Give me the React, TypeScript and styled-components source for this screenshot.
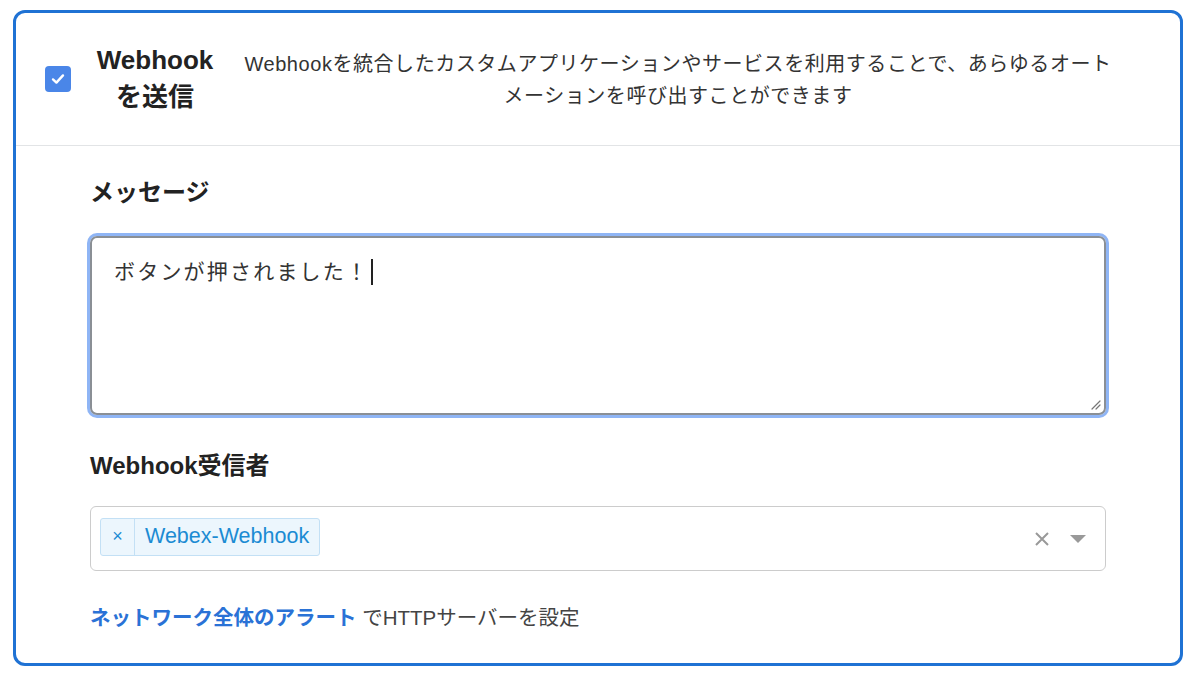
import styled, { createGlobalStyle } from 'styled-components';

const GlobalStyle = createGlobalStyle`
	html, body {
		margin: 0;
		padding: 0;
		background: #ffffff;
	}
	body {
		font-family: 'Liberation Sans', 'Noto Sans CJK JP', sans-serif;
		color: #222;
	}
`;

const App = () => {
	return (
		<>
			<GlobalStyle />
			<SCard>
				<SHeader>
					<SCheckbox>
						<svg width='16' height='16' viewBox='0 0 16 16'>
							<path d='M3 8.4 L6.4 11.6 L13 4.4' fill='none' stroke='#fff' strokeWidth='2.4' strokeLinecap='round' strokeLinejoin='round' />
						</svg>
					</SCheckbox>
					<STitle>
						Webhook
						<br />
						を送信
					</STitle>
					<SDescription>
						Webhookを統合したカスタムアプリケーションやサービスを利用することで、あらゆるオート
						<br />
						メーションを呼び出すことができます
					</SDescription>
				</SHeader>
				<SBody>
					<SLabel>メッセージ</SLabel>
					<SEditor>
						<span>ボタンが押されました！</span>
						<SCaret />
						<SGrip width='12' height='12' viewBox='0 0 12 12'>
							<path d='M11 3 L3 11 M11 7 L7 11' stroke='#777' strokeWidth='1.2' strokeLinecap='round' />
						</SGrip>
					</SEditor>
					<SLabel $top={36}>Webhook受信者</SLabel>
					<SSelect>
						<STag>
							<STagRemove>×</STagRemove>
							<STagLabel>Webex-Webhook</STagLabel>
						</STag>
						<SSelectIcons>
							<svg width='16' height='16' viewBox='0 0 16 16'>
								<path d='M2 2 L14 14 M14 2 L2 14' stroke='#999' strokeWidth='2' />
							</svg>
							<svg width='18' height='10' viewBox='0 0 18 10'>
								<path d='M1 1 L17 1 L9 9 Z' fill='#999' />
							</svg>
						</SSelectIcons>
					</SSelect>
					<SFooter>
						<a href='#'>ネットワーク全体のアラート</a> でHTTPサーバーを設定
					</SFooter>
				</SBody>
			</SCard>
		</>
	);
};

export default App;

const SCard = styled.div`
	margin: 10px 17px 0 13px;
	height: 650px;
	border: 3px solid #1f72d4;
	border-radius: 12px;
	overflow: hidden;
	display: flex;
	flex-direction: column;
`;

const SHeader = styled.div`
	height: 133px;
	flex-shrink: 0;
	border-bottom: 1px solid #e2e4e6;
	display: flex;
	align-items: center;
	padding-left: 29px;
	box-sizing: border-box;
`;

const SCheckbox = styled.div`
	width: 26px;
	height: 26px;
	border-radius: 4px;
	background: #4a86e8;
	display: flex;
	align-items: center;
	justify-content: center;
	flex-shrink: 0;
`;

const STitle = styled.div`
	width: 126px;
	margin-left: 21px;
	text-align: center;
	font-size: 26px;
	font-weight: 700;
	line-height: 37px;
	color: #222;
	margin-top: -1px;
`;

const SDescription = styled.div`
	flex: 1;
	margin-left: 8px;
	margin-right: 50px;
	text-align: center;
	font-size: 20px;
	letter-spacing: 0.55px;
	line-height: 32px;
	color: #333;
	margin-top: 2px;
`;

const SBody = styled.div`
	padding: 32px 74px 0 74px;
	display: flex;
	flex-direction: column;
`;

const SLabel = styled.div<{ $top?: number }>`
	margin-top: ${(p) => p.$top ?? 0}px;
	font-size: 24px;
	font-weight: 700;
	line-height: 30px;
	color: #222;
`;

const SEditor = styled.div`
	position: relative;
	margin-top: 28px;
	height: 179px;
	box-sizing: border-box;
	border: 2px solid #8a8f95;
	border-radius: 7px;
	box-shadow: 0 0 0 3px #8fb5f5;
	padding: 20px 22px;
	font-size: 21px;
	line-height: 28px;
	letter-spacing: 2.2px;
	color: #333;
	display: flex;
	align-items: flex-start;
`;

const SCaret = styled.span`
	display: inline-block;
	width: 1.5px;
	height: 26px;
	margin-top: 1px;
	margin-left: 2px;
	background: #222;
`;

const SGrip = styled.svg`
	position: absolute;
	right: 3px;
	bottom: 3px;
`;

const SSelect = styled.div`
	margin-top: 25px;
	height: 65px;
	box-sizing: border-box;
	border: 1px solid #cccccc;
	border-radius: 6px;
	display: flex;
	align-items: center;
	padding: 0 18px 0 9px;
`;

const STag = styled.div`
	display: flex;
	align-items: stretch;
	height: 38px;
	margin-bottom: 4px;
	box-sizing: border-box;
	border: 1px solid #c3e0f5;
	border-radius: 3px;
	background: #ecf6fd;
	color: #1b8bd3;
	font-size: 21.5px;
`;

const STagRemove = styled.span`
	width: 33px;
	display: flex;
	align-items: center;
	justify-content: center;
	border-right: 1px solid #c3e0f5;
	font-size: 18px;
`;

const STagLabel = styled.span`
	display: flex;
	align-items: center;
	padding: 0 10px;
`;

const SSelectIcons = styled.div`
	margin-left: auto;
	display: flex;
	align-items: center;
	gap: 19px;
`;

const SFooter = styled.div`
	margin-top: 33px;
	font-size: 20.5px;
	line-height: 28px;
	color: #444;

	a {
		color: #2a72d6;
		font-weight: 700;
		text-decoration: none;
	}
`;
